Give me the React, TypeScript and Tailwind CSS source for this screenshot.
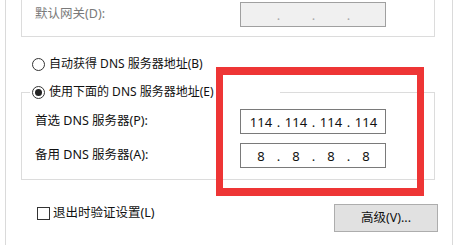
import React from 'react'

const font = "font-['Noto_Sans','Noto_Sans_CJK_SC',sans-serif]"

const IpBox = ({ parts, disabled }: { parts: string[]; disabled?: boolean }) => (
  <div
    className={`w-[146px] h-[25px] border flex items-center pl-[5px] text-[13px] ${
      disabled ? 'bg-[#f0f0f0] border-[#a0a0a0] text-[#a8a8a8]' : 'bg-white border-[#7a7a7a] text-[#111]'
    }`}
  >
    {parts.map((p, i) => (
      <React.Fragment key={i}>
        {i > 0 && <span className="w-[5px] text-center leading-[18px]">.</span>}
        <span className="w-[30px] text-center leading-[18px]">{p}</span>
      </React.Fragment>
    ))}
  </div>
)

const Radio = ({ checked, label }: { checked?: boolean; label: string }) => (
  <span className="flex items-center gap-[4px] h-[18px]">
    <span className="w-[13px] h-[13px] rounded-full border border-[#333] bg-white flex items-center justify-center">
      {checked && <span className="w-[7px] h-[7px] rounded-full bg-[#222]" />}
    </span>
    <span className="leading-[18px] whitespace-nowrap text-[12px]">{label}</span>
  </span>
)

export default function App() {
  return (
    <div className={`w-[456px] h-[245px] bg-white overflow-hidden relative text-[12.5px] text-[#111] ${font}`}>
      <div className="ml-[5px] w-[448px] h-full border-x border-[#dadada] pl-[15px]">
        {/* 上一组：默认网关 */}
        <div className="w-[414px] h-[37px] border-x border-b border-[#dcdcdc] pt-[2px] pl-[13px] flex items-start">
          <div className="w-[205px] h-[25px] flex items-center text-[#7a7a7a]">默认网关(D):</div>
          <IpBox parts={['', '', '', '']} disabled />
        </div>

        <div className="mt-[18px] ml-[11px]">
          <Radio label="自动获得 DNS 服务器地址(B)" />
        </div>

        <fieldset className="mt-[10px] w-[414px] border border-[#dcdcdc] pl-[8px] pt-[8px] pb-[11px]">
          <legend className="w-[250px] pl-[2px]">
            <Radio checked label="使用下面的 DNS 服务器地址(E)" />
          </legend>
          <div className="pl-[5px] flex items-center">
            <div className="w-[205px]">首选 DNS 服务器(P):</div>
            <IpBox parts={['114', '114', '114', '114']} />
          </div>
          <div className="pl-[5px] mt-[9px] flex items-center">
            <div className="w-[205px]">备用 DNS 服务器(A):</div>
            <IpBox parts={['8', '8', '8', '8']} />
          </div>
        </fieldset>

        <div className="mt-[24px] ml-[16px] w-[401px] flex justify-between items-start">
          <label className="h-[18px] flex items-center gap-[3px]">
            <span className="w-[13px] h-[13px] border border-[#333] bg-white" />
            <span className="leading-[18px]">退出时验证设置(L)</span>
          </label>
          <button className="w-[104px] h-[28px] bg-[#e1e1e1] border border-[#adadad] flex items-center justify-center text-[#111]">
            高级(V)...
          </button>
        </div>
      </div>

      {/* 红色标注框 */}
      <div className="absolute left-[216px] top-[67px] w-[208px] h-[129px] border-x-[7px] border-y-[8px] border-[#ee3535]" />
    </div>
  )
}
